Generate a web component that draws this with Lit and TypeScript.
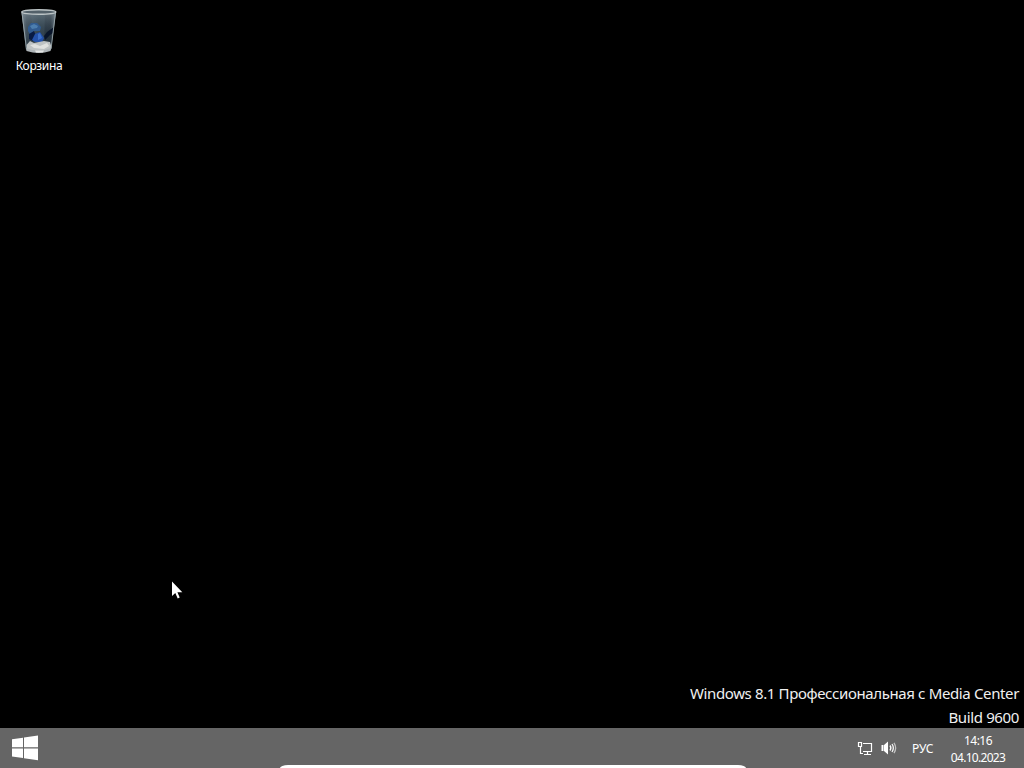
import { LitElement, html, css } from "lit";
import { customElement, property } from "lit/decorators.js";

@customElement("recycle-bin")
export class RecycleBin extends LitElement {
    @property({ type: String }) label = "";

    static styles = css`
        :host {
            display: flex;
            flex-direction: column;
            align-items: center;
            width: 78px;
        }

        .bin {
            display: block;
            width: 46px;
            height: 52px;
        }

        .bin-label {
            margin-top: 2px;
            font-size: 12px;
            line-height: 16px;
            letter-spacing: -0.35px;
            white-space: nowrap;
            color: #fff;
        }
    `;

    render() {
        return html`
            <svg class="bin" viewBox="0 0 46 52">
                <defs>
                    <linearGradient id="glass" x1="0" y1="0" x2="1" y2="0">
                        <stop offset="0" stop-color="#8b979d" />
                        <stop offset="0.15" stop-color="#4e5d67" />
                        <stop offset="0.5" stop-color="#303f49" />
                        <stop offset="0.85" stop-color="#2e3a43" />
                        <stop offset="1" stop-color="#87939a" />
                    </linearGradient>
                    <linearGradient id="shade" x1="0" y1="0" x2="0" y2="1">
                        <stop offset="0" stop-color="#82919a" stop-opacity="0.6" />
                        <stop offset="0.5" stop-color="#1b2b3b" stop-opacity="0.25" />
                        <stop offset="1" stop-color="#071018" stop-opacity="0.6" />
                    </linearGradient>
                </defs>
                <path d="M5.5 8 L10 46 Q23 51 35 46 L40 8 Z" fill="url(#glass)" />
                <path d="M5.5 8 L10 46 Q23 51 35 46 L40 8 Z" fill="url(#shade)" />
                <path d="M15 10 L18 44 L28 44 L29 10 Z" fill="#6d8493" opacity="0.15" />
                <path d="M38 23 L31 28 L28 32 L29 36 L34 31 L37 29 Z" fill="#09152a" />
                <path d="M12 23 L15 19 L21 19 L25 23 L24 27 L18 27 L15 32 L12 27 Z" fill="#315b8f" />
                <path d="M14 22 L18 20 L22 22 L21 24 L16 25 Z" fill="#4d7eae" />
                <path d="M13 30 L18 27 L20 32 L17 37 L13 35 Z" fill="#091b43" />
                <path d="M19 30 L24 28 L28 34 L26 38 L19 38 L16 36 Z" fill="#2451a9" />
                <path d="M22 30 L24 29 L26 34 L22 36 Z" fill="#3c70cb" />
                <path d="M10.5 41 L14 37 L18 39 L23 38 L28 37 L34 38 L35.5 43 L34.5 46 Q23 50 11 46 Z" fill="#bec2c3" />
                <path d="M14 41 L19 40 L24 42 L31 39 L33 42 L28 45 L18 44 Z" fill="#e0e1df" />
                <path d="M10 44 Q22 49 35 44 L34.5 47 Q23 51 10.5 47 Z" fill="#aeb4b7" />
                <path d="M19 46.5 L28 46.5 L27 48.5 L20 48.5 Z" fill="#e3e5e4" />
                <path d="M6 9 L10.5 45 M39.5 9 L35 45" stroke="#9ca9ae" stroke-width="0.9" fill="none" />
                <ellipse cx="22.8" cy="8" rx="17" ry="2.3" fill="#53616a" stroke="#bcc4c6" stroke-width="1.4" />
            </svg>
            <span class="bin-label">${this.label}</span>
        `;
    }
}

@customElement("task-bar")
export class TaskBar extends LitElement {
    @property({ type: String }) language = "";
    @property({ type: String }) time = "";
    @property({ type: String }) date = "";

    static styles = css`
        :host {
            display: flex;
            align-items: center;
            justify-content: space-between;
            box-sizing: border-box;
            height: 40px;
            padding: 0 12px 0 11px;
            background-color: #656565;
            color: #fff;
            font-size: 12px;
        }

        .start {
            display: block;
            width: 28px;
            height: 28px;
        }

        .tray {
            display: flex;
            align-items: center;
            height: 40px;
        }

        .icon {
            display: block;
            width: 16px;
            height: 16px;
            margin-right: 8px;
        }

        .language {
            width: 22px;
            margin: 1px 10px 0 7px;
            white-space: nowrap;
            letter-spacing: -0.1px;
        }

        .clock {
            display: flex;
            flex-direction: column;
            align-items: center;
            width: 68px;
            padding-top: 2px;
            line-height: 17px;
            letter-spacing: -0.7px;
            white-space: nowrap;
        }

        .time {
            letter-spacing: -0.5px;
        }
    `;

    render() {
        return html`
            <svg class="start" viewBox="0 0 28 28">
                <path
                    fill="#fff"
                    d="M1 5.2 L12 3.7 V13.3 H1 Z M13 3.5 L27 1.5 V13.3 H13 Z M1 14.5 H12 V24.1 L1 22.6 Z M13 14.5 H27 V26.3 L13 24.3 Z"
                />
            </svg>
            <div class="tray">
                <svg class="icon" viewBox="0 0 16 16" fill="none" stroke="#fff" stroke-width="1.2">
                    <path d="M6 3.5 H14.5 V11.5 H6 M10.5 11.5 V14 M7 14.5 H14" />
                    <path d="M1.5 2.5 H4.5 V6.5 H1.5 Z M3.5 7 V13.5 H6" />
                </svg>
                <svg class="icon" viewBox="0 0 16 16">
                    <path fill="#fff" d="M0.5 5 H2.5 V11 H0.5 Z M3 5 L7 1.5 V14.5 L3 11 Z" />
                    <g fill="none" stroke="#fff" stroke-width="1.3">
                        <path d="M9 5.5 Q10.8 8 9 10.5" />
                        <path d="M11 4 Q13.7 8 11 12" opacity="0.95" />
                        <path d="M13 2.8 Q16.3 8 13 13.2" opacity="0.6" />
                    </g>
                </svg>
                <span class="language">${this.language}</span>
                <div class="clock">
                    <span class="time">${this.time}</span>
                    <span>${this.date}</span>
                </div>
            </div>
        `;
    }
}

@customElement("app-root")
export class AppRoot extends LitElement {
    static styles = css`
        :host {
            display: flex;
            flex-direction: column;
            position: relative;
            width: 1024px;
            height: 768px;
            overflow: hidden;
            background-color: #000;
            font-family: "Noto Sans", "Open Sans", sans-serif;
        }

        .desktop {
            display: flex;
            flex: 1;
            flex-direction: column;
            justify-content: space-between;
            padding-top: 4px;
        }

        .watermark {
            margin-bottom: -1px;
            padding-right: 5px;
            color: #f0f0f0;
            font-size: 15px;
            line-height: 24px;
            letter-spacing: -0.37px;
            text-align: right;
            white-space: nowrap;
        }

        .pointer {
            position: absolute;
            left: 171px;
            top: 580px;
            width: 13px;
            height: 21px;
        }

        .handle {
            position: absolute;
            left: 280px;
            bottom: 0;
            width: 466px;
            height: 3px;
            border-radius: 8px 8px 0 0 / 3px 3px 0 0;
            background-color: #fff;
        }
    `;

    render() {
        return html`
            <div class="desktop">
                <recycle-bin label="Корзина"></recycle-bin>
                <div class="watermark">
                    <div>Windows 8.1 Профессиональная с Media Center</div>
                    <div>Build 9600</div>
                </div>
            </div>
            <task-bar language="РУС" time="14:16" date="04.10.2023"></task-bar>
            <div class="handle"></div>
            <svg class="pointer" viewBox="0 0 13 21">
                <path fill="#fff" d="M1 1.5 V16 L4.3 13 L6.7 18.5 L8.7 17.6 L6.4 12.2 H11.3 Z" />
            </svg>
        `;
    }
}
